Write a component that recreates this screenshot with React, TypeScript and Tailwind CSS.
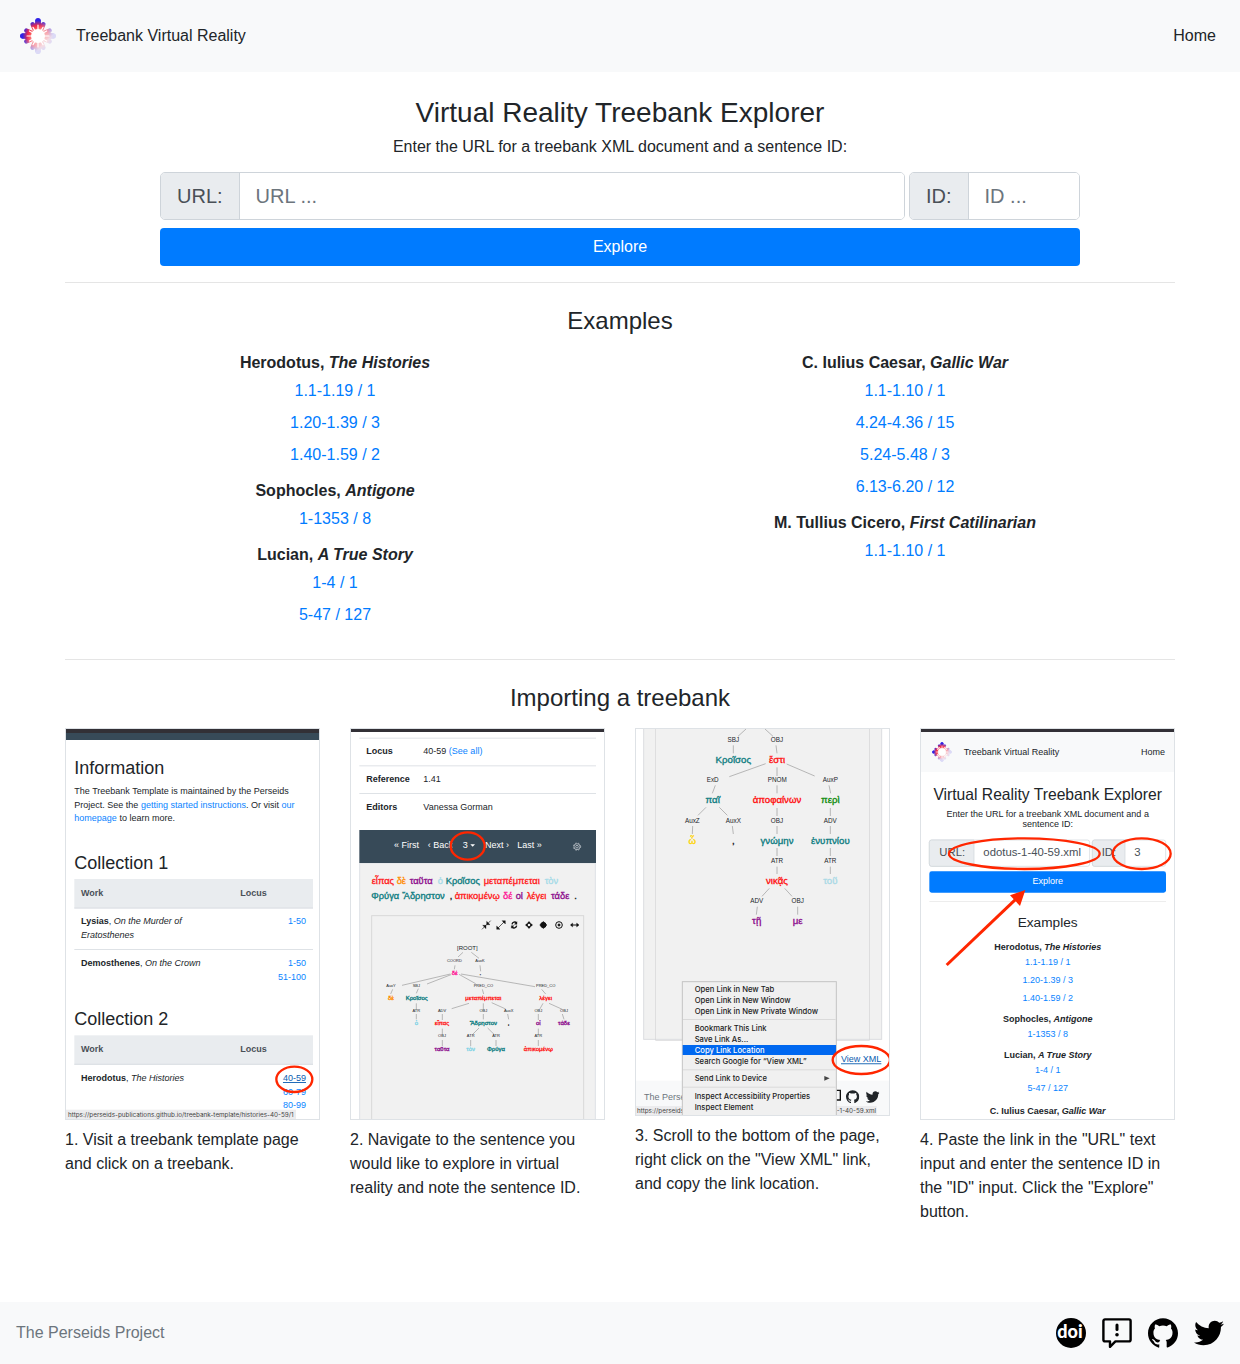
import React from 'react';
import { SiGithub } from 'react-icons/si';
import { FaTwitter } from 'react-icons/fa';

const RED = '#ff2600';
const TEAL = '#0b7b80';
const PURPLE = '#8b0a8b';
const LINK = '#0a84ff';
const INK = '#212529';

function Petals() {
  return (
    <g>
      {[0, 90, 180, 270].map((a) => (
        <g key={a} transform={`rotate(${a})`}>
          <path d="M-4 -6L-2.6 -15.4a2.7 2.7 0 0 1 5.2 0L4 -6z" />
          <circle cx="0" cy="-15.2" r="2.8" />
          <path d="M-5 -5L-7.3 -10.4a2.3 2.3 0 0 1 3.6 -2.8L0 -8z" />
          <path d="M5 -5L7.3 -10.4a2.3 2.3 0 0 0 -3.6 -2.8L0 -8z" />
        </g>
      ))}
    </g>
  );
}

function Flower({ id }: { id: string }) {
  return (
    <g>
      <defs>
        <radialGradient id={`${id}-c`} gradientUnits="userSpaceOnUse" cx="0" cy="0" r="18">
          <stop offset="0.35" stopColor="#ff6a60" />
          <stop offset="0.58" stopColor="#f0284a" />
          <stop offset="0.72" stopColor="#8c2a98" />
          <stop offset="0.86" stopColor="#3022e6" />
        </radialGradient>
        <linearGradient id={`${id}-f`} gradientUnits="userSpaceOnUse" x1="-5" y1="-5" x2="10" y2="10">
          <stop offset="0" stopColor="#fff" />
          <stop offset="0.45" stopColor="#fff" stopOpacity="0.5" />
          <stop offset="0.8" stopColor="#fff" stopOpacity="0.14" />
        </linearGradient>
        <mask id={`${id}-m`} maskUnits="userSpaceOnUse" x="-20" y="-20" width="40" height="40">
          <rect x="-20" y="-20" width="40" height="40" fill={`url(#${id}-f)`} />
        </mask>
      </defs>
      <g mask={`url(#${id}-m)`} fill={`url(#${id}-c)`}>
        <Petals />
      </g>
      <circle r="7" fill="#fff" />
      <g stroke="#fff" strokeWidth="1.2" strokeLinecap="round">
        {[0, 30, 60, 90, 120, 150, 180, 210, 240, 270, 300, 330].map((a) => (
          <line key={a} x1="0" y1="0" x2="0" y2={a % 90 === 0 ? -11 : -10} transform={`rotate(${a})`} />
        ))}
      </g>
    </g>
  );
}

type Word = [x: number, y: number, text: string, color: string];

function Words({
  items,
  size,
  middle,
  heavy,
}: {
  items: Word[];
  size: number;
  middle?: boolean;
  heavy?: boolean;
}) {
  return (
    <g fontSize={size} textAnchor={middle ? 'middle' : 'start'} strokeWidth={heavy ? 1 : 0}>
      {items.map(([x, y, t, c]) => (
        <text key={`${x}-${y}`} x={x} y={y} fill={c} stroke={c}>
          {t}
        </text>
      ))}
    </g>
  );
}

function Shot({ height, label, children }: { height: number; label: string; children: React.ReactNode }) {
  return (
    <svg
      role="img"
      aria-label={label}
      viewBox={`18 15 759 ${height}`}
      className="block h-auto w-full border border-[#dee2e6] bg-white"
      fontFamily='"Liberation Sans", Arial, sans-serif'
      fontSize="27"
      fill={INK}
    >
      {children}
    </svg>
  );
}

function TemplateShot() {
  return (
    <Shot height={1170} label="Treebank template page">
      <rect x="18" y="15" width="759" height="12" fill="#323036" />
      <rect x="18" y="27" width="759" height="21" fill="#374a58" />
      <text x="43" y="150" fontSize="54">Information</text>
      <text x="43" y="210">The Treebank Template is maintained by the Perseids</text>
      <text x="43" y="251">
        Project. See the <tspan fill={LINK}>getting started instructions</tspan>. Or visit <tspan fill={LINK}>our</tspan>
      </text>
      <text x="43" y="292">
        <tspan fill={LINK}>homepage</tspan> to learn more.
      </text>
      {[0, 469].map((dy, i) => (
        <g key={dy}>
          <text x="43" y={434 + dy} fontSize="54">{`Collection ${i + 1}`}</text>
          <rect x="43" y={465 + dy} width="716" height="88" fill="#e9ecef" />
          <rect x="43" y={550 + dy} width="716" height="4" fill="#dee2e6" />
          <g fontWeight="700" fill="#495057">
            <text x="63" y={515 + dy}>Work</text>
            <text x="541" y={515 + dy}>Locus</text>
          </g>
        </g>
      ))}
      <text x="63" y="601">
        <tspan fontWeight="700">Lysias</tspan>, <tspan fontStyle="italic">On the Murder of</tspan>
      </text>
      <text x="63" y="642" fontStyle="italic">Eratosthenes</text>
      <rect x="43" y="675" width="716" height="3" fill="#dee2e6" />
      <text x="63" y="726">
        <tspan fontWeight="700">Demosthenes</tspan>, <tspan fontStyle="italic">On the Crown</tspan>
      </text>
      <text x="63" y="1071">
        <tspan fontWeight="700">Herodotus</tspan>, <tspan fontStyle="italic">The Histories</tspan>
      </text>
      <g fill={LINK} textAnchor="end">
        <text x="738" y="601">1-50</text>
        <text x="738" y="726">1-50</text>
        <text x="738" y="767">51-100</text>
        <text x="738" y="1071" fill="#0a5cb0" textDecoration="underline">40-59</text>
        <text x="738" y="1112">60-79</text>
        <text x="738" y="1152">80-99</text>
      </g>
      <rect x="18" y="1157" width="690" height="28" fill="#ececee" />
      <text x="24" y="1180" fontSize="19" fontFamily="Inter, sans-serif" fill="#444">
        https://perseids-publications.github.io/treebank-template/histories-40-59/1
      </text>
      <ellipse cx="703" cy="1066" rx="54" ry="38" fill="none" stroke={RED} strokeWidth="7" />
    </Shot>
  );
}

const sentence: Word[] = [
  [80, 481, 'εἶπας', '#ff1a1a'],
  [155, 481, 'δὲ', '#ff8c00'],
  [194, 481, 'ταῦτα', PURPLE],
  [278, 481, 'ὁ', '#a6dbe8'],
  [302, 481, 'Κροῖσος', TEAL],
  [416, 481, 'μεταπέμπεται', '#ff1a1a'],
  [599, 481, 'τὸν', '#a6dbe8'],
  [79, 525, 'Φρύγα', TEAL],
  [172, 525, 'Ἄδρηστον', TEAL],
  [314, 525, ',', INK],
  [329, 525, 'ἀπικομένῳ', '#ff1a1a'],
  [474, 525, 'δέ', '#ff1493'],
  [512, 525, 'οἱ', PURPLE],
  [545, 525, 'λέγει', '#ff1a1a'],
  [618, 525, 'τάδε', PURPLE],
  [688, 525, '.', INK],
];

const smallLabels: Word[] = [
  [328, 714, 'COORD', INK],
  [405, 714, 'AuxK', INK],
  [138, 789, 'AuxY', INK],
  [214, 789, 'SBJ', INK],
  [415, 789, 'PRED_CO', INK],
  [602, 789, 'PRED_CO', INK],
  [214, 864, 'ATR', INK],
  [291, 864, 'ADV', INK],
  [415, 864, 'OBJ', INK],
  [491, 864, 'AuxX', INK],
  [580, 864, 'OBJ', INK],
  [657, 864, 'OBJ', INK],
  [291, 940, 'OBJ', INK],
  [377, 940, 'ATR', INK],
  [453, 940, 'ATR', INK],
  [580, 940, 'ATR', INK],
];

const smallWords: Word[] = [
  [329, 753, 'δέ', '#ff1493'],
  [406, 753, '.', INK],
  [138, 829, 'δὲ', '#ff8c00'],
  [215, 829, 'Κροῖσος', TEAL],
  [415, 829, 'μεταπέμπεται', '#ff1a1a'],
  [602, 829, 'λέγει', '#ff1a1a'],
  [214, 904, 'ὁ', '#7fd3e6'],
  [291, 904, 'εἶπας', '#ff1a1a'],
  [415, 904, 'Ἄδρηστον', TEAL],
  [491, 904, ',', INK],
  [580, 904, 'οἱ', PURPLE],
  [657, 904, 'τάδε', PURPLE],
  [291, 980, 'ταῦτα', PURPLE],
  [377, 980, 'τὸν', '#7fd3e6'],
  [453, 980, 'Φρύγα', TEAL],
  [580, 980, 'ἀπικομένῳ', '#ff1a1a'],
];

function SentenceShot() {
  return (
    <Shot height={1170} label="Sentence view with the sentence ID circled">
      <rect x="18" y="15" width="759" height="9" fill="#323036" />
      <g fill="#dee2e6">
        <rect x="43" y="41" width="710" height="3" />
        <rect x="43" y="124" width="710" height="3" />
        <rect x="43" y="207" width="710" height="3" />
      </g>
      <g fontWeight="700">
        <text x="64" y="91">Locus</text>
        <text x="64" y="174">Reference</text>
        <text x="64" y="257">Editors</text>
      </g>
      <text x="235" y="91">
        40-59 <tspan fill={LINK}>(See all)</tspan>
      </text>
      <text x="235" y="174">1.41</text>
      <text x="235" y="257">Vanessa Gorman</text>

      <rect x="44" y="417" width="707" height="780" fill="#f1f1f1" stroke="#dee2e6" strokeWidth="3" />
      <rect x="43" y="318" width="710" height="99" fill="#374a58" />
      <g fill="#fff">
        <text x="147" y="372">« First</text>
        <text x="248" y="372">‹ Back</text>
        <rect x="322" y="335" width="92" height="64" fill="#374a58" />
        <text x="353" y="373">3</text>
        <path d="M376 361h14l-7 7z" />
        <text x="420" y="372">Next ›</text>
        <text x="517" y="372">Last »</text>
      </g>
      <g fill="none" stroke="#d5dade" strokeWidth="2">
        <circle cx="696" cy="368" r="9" />
        <circle cx="696" cy="368" r="4" />
        <circle cx="696" cy="368" r="11" strokeDasharray="4 5" />
      </g>
      <ellipse cx="368" cy="366" rx="51" ry="41" fill="none" stroke={RED} strokeWidth="7" />
      <Words items={sentence} size={28} heavy />

      <rect x="80" y="575" width="636" height="640" fill="#f1f1f1" stroke="#d8d8d8" strokeWidth="3" />
      <g stroke="#111" strokeWidth="3" fill="#111">
        <path d="M411 616l26-26" strokeWidth="2" />
        <path d="M413 604h10v10zM425 592v10h10z" strokeWidth="1" />
        <path d="M458 613l20-20" strokeWidth="2" />
        <path d="M455 616v-10l10 10zM481 590v10l-10-10z" strokeWidth="1" />
        <path d="M501 601a8 8 0 0 1 14-4M515 605a8 8 0 0 1-14 4" fill="none" strokeWidth="4" />
        <path d="M516 593v8h-8zM499 613v-8h8z" strokeWidth="1" />
        <path d="M552 593l4 5h-8zM552 613l4-5h-8zM542 603l5-4v8zM562 603l-5-4v8z" />
        <circle cx="595" cy="603" r="8" />
        <path d="M584 603h22M595 592v22" />
        <circle cx="642" cy="603" r="10" fill="none" />
        <circle cx="642" cy="603" r="3" />
        <path d="M678 603h22" />
        <path d="M676 603l7-6v12zM702 603l-7-6v12z" strokeWidth="1" />
      </g>
      <path
        d="M354 685l-15 14M379 685l23 18M330 724l-2 12M405 724l2 18M316 750L171 784M318 752l-72 28M342 751l50 28M348 750l222 38M143 796l-6 14M220 794l-6 14M412 796l4 14M590 796l12 14M214 838v18M214 870v16M372 838l-52 16M415 838v18M440 836l42 19M292 870v18M415 870v16M488 870l3 16M594 838l-10 18M612 838l40 18M580 870v18M652 870l5 16M292 914v18M402 912l-20 20M428 912l20 20M580 914v18M292 948v18M377 948v18M453 948v18M580 948v18"
        fill="none"
        stroke="#999"
        strokeWidth="2"
      />
      <text x="367" y="678" fontSize="18" textAnchor="middle">[ROOT]</text>
      <Words items={smallLabels} size={12} middle />
      <Words items={smallWords} size={18} middle heavy />
    </Shot>
  );
}

const treeLabels: Word[] = [
  [310, 54, 'SBJ', INK],
  [441, 54, 'OBJ', INK],
  [248, 175, 'ExD', INK],
  [442, 175, 'PNOM', INK],
  [601, 175, 'AuxP', INK],
  [187, 296, 'AuxZ', INK],
  [310, 296, 'AuxX', INK],
  [441, 296, 'OBJ', INK],
  [601, 296, 'ADV', INK],
  [441, 417, 'ATR', INK],
  [601, 417, 'ATR', INK],
  [380, 538, 'ADV', INK],
  [503, 538, 'OBJ', INK],
];

const treeWords: Word[] = [
  [310, 117, 'Κροῖσος', TEAL],
  [441, 117, 'ἔστι', '#ff0d0d'],
  [248, 238, 'παῖ', TEAL],
  [441, 238, 'ἀποφαίνων', '#ff0d0d'],
  [601, 238, 'περὶ', '#0a8a0a'],
  [187, 359, 'ὦ', '#ffd400'],
  [310, 359, ',', INK],
  [441, 359, 'γνώμην', TEAL],
  [601, 359, 'ἐνυπνίου', TEAL],
  [441, 480, 'νικᾷς', '#ff0d0d'],
  [601, 480, 'τοῦ', '#a9d9e6'],
  [380, 601, 'τῇ', PURPLE],
  [503, 601, 'με', PURPLE],
];

const menuItems: Word[] = [
  [194, 804, 'Open Link in New Tab', '#222'],
  [194, 836, 'Open Link in New Window', '#222'],
  [194, 869, 'Open Link in New Private Window', '#222'],
  [194, 922, 'Bookmark This Link', '#222'],
  [194, 954, 'Save Link As...', '#222'],
  [194, 987, 'Copy Link Location', '#fff'],
  [194, 1019, 'Search Google for “View XML”', '#222'],
  [194, 1071, 'Send Link to Device', '#222'],
  [194, 1124, 'Inspect Accessibility Properties', '#222'],
  [194, 1157, 'Inspect Element', '#222'],
];

function MenuShot() {
  return (
    <Shot height={1158} label="Context menu on the View XML link">
      <rect x="41" y="0" width="714" height="946" fill="#f1f1f1" stroke="#dcdde0" strokeWidth="3" />
      <rect x="77" y="0" width="641" height="949" fill="none" stroke="#d4d4d6" strokeWidth="2" />
      <path
        d="M348 15l-24 22M405 15l24 22M310 64v24M438 64l3 24M407 119L298 158M441 130v26M470 120l84 36M256 184l-9 24M441 184v24M597 184l5 24M228 250l-24 24M268 250l24 24M441 252v24M601 252v24M188 306l-1 24M307 306l3 24M441 306v24M601 306v24M441 372v24M601 372v24M441 428v22M601 428v22M418 493l-22 24M464 493l22 24M382 548l-3 24M503 548v24"
        fill="none"
        stroke="#999"
        strokeWidth="2"
      />
      <Words items={treeLabels} size={19} middle />
      <Words items={treeWords} size={29} middle heavy />

      <rect x="18" y="1070" width="759" height="103" fill="#f8f9fa" />
      <text x="42" y="1128" fill="#6c757d">The Perse</text>
      <path d="M606 1099h25v29h-18" fill="none" stroke="#111" strokeWidth="4" />
      <svg x="648" y="1098" width="40" height="40" viewBox="0 0 24 24" fill="#000">
        <SiGithub size={24} />
      </svg>
      <svg x="707" y="1098" width="42" height="42" viewBox="0 0 24 24" fill="#000">
        <FaTwitter size={24} />
      </svg>
      <rect x="18" y="1146" width="722" height="27" fill="#ececee" />
      <g fontSize="19" fontFamily="Inter, sans-serif" fill="#444">
        <text x="21" y="1167">https://perseids</text>
        <text x="738" y="1167" textAnchor="end">-1-40-59.xml</text>
      </g>

      <rect x="157" y="773" width="462" height="410" fill="#f0f0f0" stroke="#c4c4c4" strokeWidth="3" />
      <g fill="#dadada">
        <rect x="159" y="885" width="458" height="3" />
        <rect x="159" y="1036" width="458" height="3" />
        <rect x="159" y="1088" width="458" height="3" />
      </g>
      <rect x="158" y="963" width="460" height="30" fill="#0068f0" />
      <g fontFamily="Inter, sans-serif" fontWeight="500">
        <Words items={menuItems} size={23} />
      </g>
      <path d="M583 1056l16 7-16 7z" fill="#444" />
      <text x="633" y="1015" fill="#0a5cb0" textDecoration="underline">View XML</text>
      <ellipse cx="694" cy="1008" rx="86" ry="42" fill="none" stroke={RED} strokeWidth="7" />
    </Shot>
  );
}

const miniLinks: Word[] = [
  [398, 724, '1.1-1.19 / 1', LINK],
  [398, 778, '1.20-1.39 / 3', LINK],
  [398, 832, '1.40-1.59 / 2', LINK],
  [398, 940, '1-1353 / 8', LINK],
  [398, 1048, '1-4 / 1', LINK],
  [398, 1102, '5-47 / 127', LINK],
];

const miniTitles: [number, string, string][] = [
  [677, 'Herodotus, ', 'The Histories'],
  [893, 'Sophocles, ', 'Antigone'],
  [1001, 'Lucian, ', 'A True Story'],
  [1170, 'C. Iulius Caesar, ', 'Gallic War'],
];

function ExplorerShot() {
  return (
    <Shot height={1170} label="Explorer form filled in with the link and sentence ID">
      <rect x="18" y="15" width="759" height="9" fill="#323036" />
      <rect x="18" y="24" width="759" height="120" fill="#f8f9fa" />
      <g transform="translate(81 84) scale(1.65)">
        <Flower id="mini" />
      </g>
      <text x="146" y="92">Treebank Virtual Reality</text>
      <text x="750" y="92" textAnchor="end">Home</text>
      <g textAnchor="middle">
        <text x="398" y="227" fontSize="47">Virtual Reality Treebank Explorer</text>
        <text x="398" y="278">Enter the URL for a treebank XML document and a</text>
        <text x="398" y="310">sentence ID:</text>
      </g>
      <g stroke="#ced4da" strokeWidth="2">
        <rect x="43" y="348" width="481" height="79" rx="7" fill="#fff" />
        <path d="M50 348h127v79H50a7 7 0 0 1-7-7v-65a7 7 0 0 1 7-7z" fill="#e9ecef" />
        <rect x="532" y="348" width="220" height="79" rx="7" fill="#fff" />
        <path d="M539 348h91v79h-91a7 7 0 0 1-7-7v-65a7 7 0 0 1 7-7z" fill="#e9ecef" />
      </g>
      <g fontSize="34" fill="#495057">
        <text x="73" y="396">URL:</text>
        <text x="205" y="396">odotus-1-40-59.xml</text>
        <text x="560" y="396">ID:</text>
        <text x="658" y="396">3</text>
      </g>
      <rect x="43" y="442" width="710" height="64" rx="7" fill="#007bff" />
      <text x="398" y="481" fill="#fff" textAnchor="middle">Explore</text>
      <rect x="43" y="532" width="710" height="2" fill="#e5e5e5" />
      <text x="398" y="609" fontSize="41" textAnchor="middle">Examples</text>
      {miniTitles.map(([y, author, work]) => (
        <text key={y} x="398" y={y} fontWeight="700" textAnchor="middle">
          {author}
          <tspan fontStyle="italic">{work}</tspan>
        </text>
      ))}
      <Words items={miniLinks} size={27} middle />
      <g fill="none" stroke={RED} strokeWidth="7">
        <ellipse cx="328" cy="389" rx="226" ry="46" />
        <ellipse cx="680" cy="389" rx="87" ry="46" />
        <path d="M95 723L305 523" strokeWidth="9" />
      </g>
      <path d="M331 498l-46 16 30 32z" fill={RED} />
    </Shot>
  );
}

type Work = { author: string; title: string; links: string[] };

const examples: Work[][] = [
  [
    { author: 'Herodotus', title: 'The Histories', links: ['1.1-1.19 / 1', '1.20-1.39 / 3', '1.40-1.59 / 2'] },
    { author: 'Sophocles', title: 'Antigone', links: ['1-1353 / 8'] },
    { author: 'Lucian', title: 'A True Story', links: ['1-4 / 1', '5-47 / 127'] },
  ],
  [
    {
      author: 'C. Iulius Caesar',
      title: 'Gallic War',
      links: ['1.1-1.10 / 1', '4.24-4.36 / 15', '5.24-5.48 / 3', '6.13-6.20 / 12'],
    },
    { author: 'M. Tullius Cicero', title: 'First Catilinarian', links: ['1.1-1.10 / 1'] },
  ],
];

const steps = [
  { Picture: TemplateShot, text: '1. Visit a treebank template page and click on a treebank.' },
  {
    Picture: SentenceShot,
    text: '2. Navigate to the sentence you would like to explore in virtual reality and note the sentence ID.',
  },
  {
    Picture: MenuShot,
    text: '3. Scroll to the bottom of the page, right click on the "View XML" link, and copy the link location.',
  },
  {
    Picture: ExplorerShot,
    text: '4. Paste the link in the "URL" text input and enter the sentence ID in the "ID" input. Click the "Explore" button.',
  },
];

function Field({ id, label, placeholder }: { id: string; label: string; placeholder: string }) {
  return (
    <div className="flex h-12 w-full rounded-[5px] border border-[#ced4da] text-xl">
      <label
        htmlFor={id}
        className="flex items-center rounded-l-[4px] border-r border-[#ced4da] bg-[#e9ecef] px-4 text-[#495057]"
      >
        {label}
      </label>
      <input
        id={id}
        type="text"
        placeholder={placeholder}
        className="min-w-0 flex-1 rounded-r-[4px] bg-white px-4 text-[#495057] placeholder:text-[#6c757d]"
      />
    </div>
  );
}

export default function App() {
  return (
    <div className="flex min-h-screen flex-col bg-white font-['Liberation_Sans',Arial,sans-serif] text-base text-[#212529]">
      <header className="flex h-18 items-center justify-between bg-[#f8f9fa] px-4">
        <a href="#home" className="flex items-center gap-4">
          <svg viewBox="-22 -22 44 44" className="h-11 w-11" aria-hidden="true">
            <Flower id="brand" />
          </svg>
          <span>Treebank Virtual Reality</span>
        </a>
        <nav>
          <a href="#home" className="p-2">
            Home
          </a>
        </nav>
      </header>

      <main className="mx-auto w-full max-w-[1140px] px-[15px]">
        <section className="mx-auto max-w-[920px] pt-6 text-center">
          <h1 className="text-[28px] leading-[34px]">Virtual Reality Treebank Explorer</h1>
          <p className="mt-[5px]">Enter the URL for a treebank XML document and a sentence ID:</p>
          <form className="mt-[13px]" onSubmit={(e) => e.preventDefault()}>
            <div className="flex gap-1">
              <div className="min-w-0 flex-1">
                <Field id="url" label="URL:" placeholder="URL ..." />
              </div>
              <div className="w-[171px]">
                <Field id="sentence" label="ID:" placeholder="ID ..." />
              </div>
            </div>
            <button type="submit" className="mt-2 h-[38px] w-full rounded-[4px] bg-[#007bff] text-white">
              Explore
            </button>
          </form>
        </section>

        <hr className="mt-4 border-[#e5e5e5]" />

        <section className="pt-6 text-center">
          <h2 className="text-2xl leading-7">Examples</h2>
          <div className="mt-4 grid grid-cols-2 gap-[30px]">
            {examples.map((column, i) => (
              <div key={i}>
                {column.map((work) => (
                  <div key={work.author} className="mb-2">
                    <h3 className="font-bold">
                      {work.author}, <em>{work.title}</em>
                    </h3>
                    <ul>
                      {work.links.map((link) => (
                        <li key={link} className="pt-1 pb-1">
                          <a href="#explore" className="text-[#007bff]">
                            {link}
                          </a>
                        </li>
                      ))}
                    </ul>
                  </div>
                ))}
              </div>
            ))}
          </div>
        </section>

        <hr className="mt-5 border-[#e5e5e5]" />

        <section className="pt-6">
          <h2 className="text-center text-2xl leading-7">Importing a treebank</h2>
          <div className="mt-4 grid grid-cols-4 gap-[30px]">
            {steps.map(({ Picture, text }) => (
              <figure key={text}>
                <Picture />
                <figcaption className="mt-2">{text}</figcaption>
              </figure>
            ))}
          </div>
        </section>
      </main>

      <footer className="mt-auto flex h-[62px] items-center justify-between bg-[#f8f9fa] px-4">
        <a href="#perseids" className="text-[#6c757d]">
          The Perseids Project
        </a>
        <div className="flex gap-4 text-black">
          <a href="#doi" aria-label="DOI">
            <svg viewBox="0 0 30 30" className="h-[30px] w-[30px]">
              <circle cx="15" cy="15" r="15" />
              <text
                x="14"
                y="20"
                textAnchor="middle"
                fontSize="18"
                fontWeight="900"
                fontFamily="Lato, sans-serif"
                fill="#fff"
              >
                doi
              </text>
            </svg>
          </a>
          <a href="#feedback" aria-label="Feedback">
            <svg
              viewBox="0 0 30 30"
              className="h-[30px] w-[30px]"
              fill="none"
              stroke="currentColor"
              strokeWidth="2.4"
              strokeLinejoin="round"
              strokeLinecap="round"
            >
              <path d="M3 1.4h24a1.6 1.6 0 0 1 1.6 1.6v18.8a1.6 1.6 0 0 1-1.6 1.6H13.4L8 28.8v-5.4H3a1.6 1.6 0 0 1-1.6-1.6V3A1.6 1.6 0 0 1 3 1.4z" />
              <path d="M15 7v4.6" strokeWidth="3" />
              <path d="M15 16.7v.1" strokeWidth="3.6" />
            </svg>
          </a>
          <a href="#github" aria-label="GitHub">
            <SiGithub size={30} />
          </a>
          <a href="#twitter" aria-label="Twitter">
            <FaTwitter size={30} />
          </a>
        </div>
      </footer>
    </div>
  );
}
